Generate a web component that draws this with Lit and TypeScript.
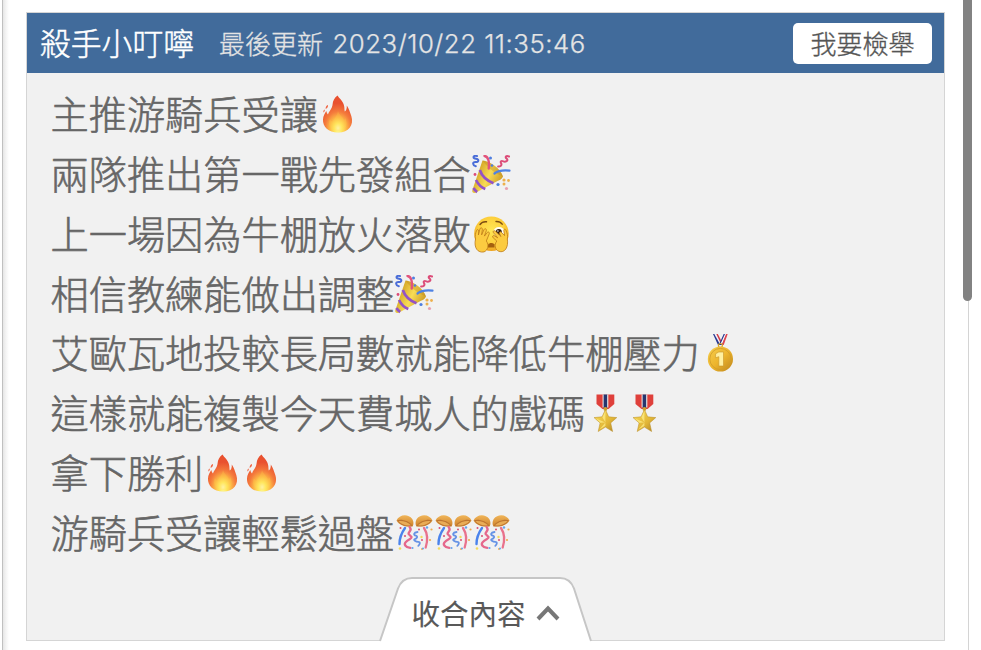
import { LitElement, html, css, svg } from "lit";
import { customElement, property, state } from "lit/decorators.js";

type EmojiName = "fire" | "popper" | "peek" | "gold" | "medal" | "ball";

interface PostLine {
  text: string;
  emojis: EmojiName[];
}

const LINES: PostLine[] = [
  { text: "主推游騎兵受讓", emojis: ["fire"] },
  { text: "兩隊推出第一戰先發組合", emojis: ["popper"] },
  { text: "上一場因為牛棚放火落敗", emojis: ["peek"] },
  { text: "相信教練能做出調整", emojis: ["popper"] },
  { text: "艾歐瓦地投較長局數就能降低牛棚壓力", emojis: ["gold"] },
  { text: "這樣就能複製今天費城人的戲碼", emojis: ["medal", "medal"] },
  { text: "拿下勝利", emojis: ["fire", "fire"] },
  { text: "游騎兵受讓輕鬆過盤", emojis: ["ball", "ball", "ball"] },
];

const DRAWINGS = {
  fire: svg`
    <defs>
      <radialGradient id="g" cx="0.52" cy="0.88" r="0.75">
        <stop offset="0" stop-color="#fffcc0" />
        <stop offset="0.18" stop-color="#ffec62" />
        <stop offset="0.38" stop-color="#fdb646" />
        <stop offset="0.6" stop-color="#f47b3c" />
        <stop offset="0.9" stop-color="#e9512f" />
      </radialGradient>
    </defs>
    <path fill="url(#g)" d="M18.500.6C20 3.500 24.600 6 25.300 12c.2 2.200.2 3.600.5 4.600 1.200-1 2.200-3 2-6.200 2.200 3.500 3.200 6.500 4.500 10.600C35.200 30 29.500 37.500 19.500 37.600 9.500 37.800 3.600 31.500 4 24.500c.2-3.500 1.600-6 3.300-8.500.3 1.600.8 2.600 1.700 3.400 1-3.400 4.300-5.700 4.600-10.200.2-3 1.900-6.500 4.900-8.600z" />
    <path fill="#ffd34d" opacity=".25" d="M19 15c.5 5 5.200 7 6 10.500.7-1 1-1.500 1.100-2.600 3.500 6 .9 13.100-6.600 13.200-7.500.2-11.500-6-8.500-12 .6 1.500 1.300 2.200 2.400 2.800 1.500-3.500 5.100-5.600 5.600-11.900z" />
    <path fill="#ef6544" d="M9 10c.3 1.800-.8 3.400-2.300 4-.3-1.900.6-3.400 2.300-4zM5.700 14.500c.3 1.300-.3 2.300-1.200 3-.4-1.300 0-2.400 1.200-3z" />
  `,
  popper: svg`
    <defs>
      <linearGradient id="g" x1="0" y1="0.3" x2="1" y2="0.8">
        <stop offset="0" stop-color="#c99416" />
        <stop offset="0.5" stop-color="#f8dc55" />
        <stop offset="1" stop-color="#c28b18" />
      </linearGradient>
    </defs>
    <path fill="url(#g)" d="M10.500 5.500C17 6 28.500 13 31 21.500c-1 2.500-3.500 3.800-5 4.200L3.200 38C1 38.400 0 37.300.3 35.300z" />
    <path fill="none" stroke="#9453c6" stroke-width="2.700" d="M7.800 15c2 6 7 10.700 13.700 13.200M4 25c2 4 5 7.500 9.300 9M1.500 33c1 1.800 2 3 3.700 4" />
    <path fill="#b6851e" opacity=".35" d="M10.500 5.500C17 6 28.500 13 31 21.500c-6-2-15-8-20.500-16z" />
    <g fill="none" stroke-linecap="round">
      <path stroke="#4b6ed8" stroke-width="2" d="M5 1C.5.2.6 3.500 4 3.800s3 3.400-.5 3.300-2.800 3.400.3 4.200" />
      <path stroke="#e2547c" stroke-width="2.400" d="M12.500 1c4 .4 5 6 4.200 12.500" />
      <path stroke="#dc4c78" stroke-width="2" d="M37 1.500c-3-1.300-4.300.5-2.200 2.300s-1.500 3.500-3.500 2.500-3.300 0-2.200 2-.7 3.300-3 3.200" />
      <path stroke="#4e82e4" stroke-width="2.200" d="M22.500 18.500c4-3 9-3.500 15-2.800" />
    </g>
    <g fill="#4e7ee0"><circle cx="18.500" cy="3" r="1.500" /><circle cx="20" cy="10.500" r="1.300" /><circle cx="26" cy="29.500" r="1.600" /></g>
    <g fill="#edb04c"><circle cx="32" cy="25" r="1.600" /><circle cx="36.500" cy="25.500" r="1.400" /><circle cx="32" cy="29" r="1.500" /></g>
    <circle cx="3" cy="19.500" r="1.400" fill="#dc4c78" />
    <circle cx="34.500" cy="33.500" r="1.600" fill="#e9a0b0" />
  `,
  peek: svg`
    <defs>
      <radialGradient id="g" cx="0.5" cy="0.4" r="0.6">
        <stop offset="0" stop-color="#ffe755" />
        <stop offset="0.65" stop-color="#fdcf3c" />
        <stop offset="1" stop-color="#eda31f" />
      </radialGradient>
    </defs>
    <circle cx="19.400" cy="18.700" r="17.300" fill="url(#g)" />
    <path fill="none" stroke="#7b4c12" stroke-width="1.400" stroke-linecap="round" d="M8 9.500c1.500-2 4-3 6.500-2.700M24 6.500c2.700-.2 4.800.8 6.200 2.700" />
    <ellipse cx="27" cy="17" rx="5.500" ry="5" fill="#fffdf2" />
    <circle cx="26.800" cy="17" r="3" fill="#2e1b0d" />
    <circle cx="25.900" cy="16" r=".8" fill="#fff" />
    <path fill="#a4610f" d="M16 29.500c1.500-2 5-2 6.500 0v3h-6.500z" />
    <g fill="#fccb40" stroke="#bd7a18" stroke-width=".8">
      <path d="M3.500 24c-.8-3 .2-6 1-8.500.5-1.500 2.300-1 2.200.6L6.400 20l1.500-6c.4-1.800 2.700-1.400 2.500.4l-.8 5.500 2.400-5.300c.7-1.600 2.800-.8 2.400.9l-2 5.600 2.800-3.500c1-1.500 2.700-.2 2 1.400l-2.900 7c3.200 4 1.300 9.600-2.300 10.900C6 38.200 1.500 33 3.500 24z" />
      <path d="M35.300 24c.8-3-.2-6-1.500-9-.7-1.400-2.200-.9-2 .6l.8 5-3-3.100c-1-1.400-2.800-.3-2.100 1.300l1.500 2.700-5.700-5.400c-1.300-1.200-2.900.3-1.800 1.700l4.200 5-3.500-2.100c-1.500-.6-2.300 1.200-1 2.100l3.600 3.200c-3 4-1.600 8.700 2 10.300 5.900 2.200 10-4.300 8.500-12.300z" />
    </g>
  `,
  gold: svg`
    <defs>
      <linearGradient id="g" x1="0" y1="0" x2="1" y2="1">
        <stop offset="0" stop-color="#f5cf50" />
        <stop offset="0.5" stop-color="#edb52d" />
        <stop offset="1" stop-color="#bd841a" />
      </linearGradient>
    </defs>
    <path fill="#2a3a91" d="M12 0h3.300l6.200 11H17z" />
    <path fill="#f4f4fa" d="M13.300 0h2.500l5 10h-2z" />
    <path fill="#d63c45" d="M15.300 0h1.500l4.200 8-1 2z" />
    <path fill="#2a3a91" d="M26 0h-3.300l-5 11h4z" />
    <path fill="#fff" d="M24 0h1.700l-4.500 10h-1.700z" />
    <path fill="#df4550" d="M25 0h1.700l-4 11h-2z" />
    <circle cx="19.400" cy="11.500" r="2" fill="none" stroke="#d8a42a" stroke-width="1.200" />
    <circle cx="19.400" cy="25" r="12.600" fill="url(#g)" />
    <circle cx="19.400" cy="25" r="10.600" fill="none" stroke="#d09c2a" stroke-width=".8" />
    <path fill="#fff0a0" stroke="#c89528" stroke-width=".6" d="M17.800 18h4.700v14h-4.700v-9.300l-3.200 1.100v-4z" />
  `,
  medal: svg`
    <defs>
      <linearGradient id="g" x1="0" y1="0" x2="1" y2="1">
        <stop offset="0" stop-color="#fae05c" />
        <stop offset="0.6" stop-color="#e2b637" />
        <stop offset="1" stop-color="#aa8024" />
      </linearGradient>
    </defs>
    <path fill="#df403b" d="M10.500.500h17.800V10l-5.800 5h-6l-6-5z" />
    <path fill="#f3f0ed" d="M16.600.500h5.700v13h-5.700z" />
    <path fill="#26366e" d="M17.600.500h3.600v14h-3.600z" />
    <circle cx="19.400" cy="15" r="1.900" fill="#d1a334" />
    <path fill="url(#g)" stroke="#b98c26" stroke-width=".5" d="M19.400 15.500l3.300 7.300 8.100.8-6.100 5.300 1.900 8.600-7.200-4.400-7.200 4.400 1.900-8.600-6.100-5.300 8.100-.8z" />
    <path fill="#fff08b" opacity=".7" d="M19.400 17v11.500l-3-5.300zM10 24.400l9.400 4.100-5.200.2zM13.500 35.500l5.900-7v3.500z" />
  `,
  ball: svg`
    <defs>
      <linearGradient id="g" x1="0" y1="0" x2="0" y2="1">
        <stop offset="0" stop-color="#f1b659" />
        <stop offset="1" stop-color="#cd812c" />
      </linearGradient>
    </defs>
    <path fill="url(#g)" d="M1.500 6.500C4 .4 13-.9 17.300 5c1.300 2 1.600 5 .4 7.200C11 13.500 4.500 11.500 1.500 6.500zM37.500 6.500C35 .4 26-.9 21.700 5c-1.300 2-1.600 5-.4 7.200C28 13.500 34.500 11.500 37.500 6.500z" />
    <path fill="#bd7530" d="M2 6.300c3.800-1.600 12.500.2 15.700 5.900C10.500 13 4.500 10.600 2 6.300zM37 6.300c-3.800-1.600-12.500.2-15.700 5.900C28.500 13 34.500 10.600 37 6.300z" />
    <path fill="#e9ac56" d="M3.500 7.200c4-.6 9.500 1 12.500 4C11 12 6.500 10.300 3.500 7.200zM35.500 7.200c-4-.6-9.500 1-12.500 4 5 .8 9.500-.9 12.500-4z" />
    <g fill="none" stroke-linecap="round">
      <path stroke="#4b83ec" stroke-width="2.400" d="M10 14c-3.500 5-5.600 10.500-5.500 16" />
      <path stroke="#e5688c" stroke-width="2.300" d="M14.500 13c4 3.500-2.800 5.500-.5 7.500s4 2.700 1 4.500-6.500 4-4.700 6.500 3.300 2 5 2.300" />
      <path stroke="#6592e5" stroke-width="1.800" d="M22.500 18c-4 .5-4.300 3-1.700 3.600s1 3-1 3.600 1 2.700 3.500 2.700 1.500 2.700 0 4" />
      <path stroke="#e9728c" stroke-width="2.300" d="M29 14c3 4.500 4 12 1.700 19.500" />
    </g>
    <g fill="#d94f72"><circle cx="5.500" cy="14" r="1" /><circle cx="24" cy="15.500" r="1" /><circle cx="10" cy="22" r="1" /><circle cx="27" cy="26" r="1" /></g>
    <g fill="#f0ac50"><circle cx="36.500" cy="15.500" r="1.100" /><circle cx="35" cy="26" r="1.100" /><circle cx="27" cy="35" r="1" /></g>
    <g fill="#f4db5d"><circle cx="5" cy="34.500" r="1.300" /><circle cx="26.500" cy="23" r="1.200" /></g>
    <g fill="#64a4ee"><circle cx="32" cy="13.500" r="1.200" /><circle cx="17.500" cy="34" r="1.100" /><circle cx="28" cy="34.500" r="1" /></g>
  `,
};

@customElement("post-emoji")
export class PostEmoji extends LitElement {
  @property() name: EmojiName = "fire";

  render() {
    return html`<svg class="drawing" viewBox="0 0 39 39">${DRAWINGS[this.name]}</svg>`;
  }

  static styles = css`
    :host {
      display: block;
      width: 38.5px;
      height: 39px;
    }
    .drawing {
      display: block;
      width: 39px;
      height: 39px;
    }
  `;
}

@customElement("app-root")
export class AppRoot extends LitElement {
  @state() open = true;

  toggle() {
    this.open = !this.open;
  }

  renderLine(line: PostLine) {
    return html`
      <div class="line">
        <span class="text">${line.text}</span>
        ${line.emojis.map((name) => html`<post-emoji .name=${name}></post-emoji>`)}
      </div>
    `;
  }

  render() {
    return html`
      <div class="page">
        <article class="card">
          <header class="header">
            <span class="name">殺手小叮嚀</span>
            <span class="updated">最後更新</span>
            <time class="time">2023/10/22 11:35:46</time>
            <button class="report">我要檢舉</button>
          </header>
          <div class="content">${this.open ? LINES.map((line) => this.renderLine(line)) : ""}</div>
          <div class="collapse" @click=${this.toggle}>
            <svg class="tab" viewBox="0 0 216 66">
              <path
                d="M2 65L20 12.500Q24 2 34 2H182Q192 2 196 12.500L213 65"
                fill="#fff"
                stroke="#c6c6c6"
                stroke-width="2"
              />
            </svg>
            <span class="label">收合內容</span>
            <svg class="chevron" viewBox="0 0 24 18">
              <path d="M2 15L12 4.500L22 15" fill="none" stroke="#777" stroke-width="4" />
            </svg>
          </div>
        </article>
        <div class="thumb"></div>
      </div>
    `;
  }

  static styles = css`
    :host {
      display: block;
      height: 650px;
      overflow: hidden;
      font-family: "Noto Sans CJK TC", sans-serif;
      font-weight: 300;
    }
    .page {
      position: relative;
      box-sizing: border-box;
      width: 967px;
      height: 650px;
      padding: 12px 22px 0 23px;
      margin-left: 2px;
      border-left: 1px solid #c0c0c0;
      border-right: 1px solid #d4d4d4;
      background: linear-gradient(90deg, #e6e6e6, #f4f4f4 3px, #fff 6px);
    }
    .card {
      display: flex;
      flex-direction: column;
      box-sizing: border-box;
      width: 919px;
      height: 629px;
      border: 1px solid #d5d5d5;
      background: #f1f1f1;
    }
    .header {
      display: flex;
      align-items: center;
      flex: none;
      box-sizing: border-box;
      height: 60px;
      padding: 0 12px 0 13px;
      background: #416b9b;
      color: #e4e4e4;
      white-space: nowrap;
    }
    .name {
      width: 179px;
      padding-bottom: 2px;
      color: #fff;
      font-size: 30.8px;
      line-height: 58px;
      -webkit-text-stroke: 0.5px #fff;
    }
    .updated {
      padding-bottom: 1px;
      font-size: 26px;
      line-height: 59px;
      -webkit-text-stroke: 0.3px #e4e4e4;
    }
    .time {
      margin-left: 9.5px;
      padding-top: 2px;
      font-family: Inter, sans-serif;
      font-size: 25.8px;
      font-weight: 300;
      letter-spacing: 0.5px;
      line-height: 58px;
      -webkit-text-stroke: 0.25px #e4e4e4;
    }
    .report {
      width: 139px;
      height: 41px;
      margin-left: auto;
      padding: 0;
      border: 0;
      border-radius: 5px;
      background: #fff;
      color: #555;
      font: 300 26px/40px "Noto Sans CJK TC", sans-serif;
      -webkit-text-stroke: 0.35px #555;
    }
    .content {
      flex: 1;
      padding: 12px 23px 0 23.5px;
      color: #666;
    }
    .line {
      display: flex;
      align-items: center;
      height: 59.75px;
    }
    .text {
      margin-right: 1px;
      padding-bottom: 4px;
      font-size: 38.2px;
      line-height: 55px;
      white-space: nowrap;
      -webkit-text-stroke: 0.6px #666;
    }
    .collapse {
      position: relative;
      display: flex;
      align-items: center;
      align-self: center;
      flex: none;
      box-sizing: border-box;
      width: 216px;
      height: 66px;
      padding: 8px 0 0 34px;
      margin-bottom: -2px;
      cursor: pointer;
    }
    .tab {
      position: absolute;
      inset: 0;
      width: 216px;
      height: 66px;
    }
    .label {
      position: relative;
      color: #595959;
      font-size: 28.5px;
      font-weight: 400;
      line-height: 58px;
      -webkit-text-stroke: 0.15px #595959;
    }
    .chevron {
      position: relative;
      width: 24px;
      height: 18px;
      margin-left: 10px;
    }
    .thumb {
      position: absolute;
      top: -10px;
      right: -4px;
      width: 9px;
      height: 311px;
      border-radius: 5px;
      background: #828282;
    }
  `;
}

declare global {
  interface HTMLElementTagNameMap {
    "app-root": AppRoot;
    "post-emoji": PostEmoji;
  }
}
